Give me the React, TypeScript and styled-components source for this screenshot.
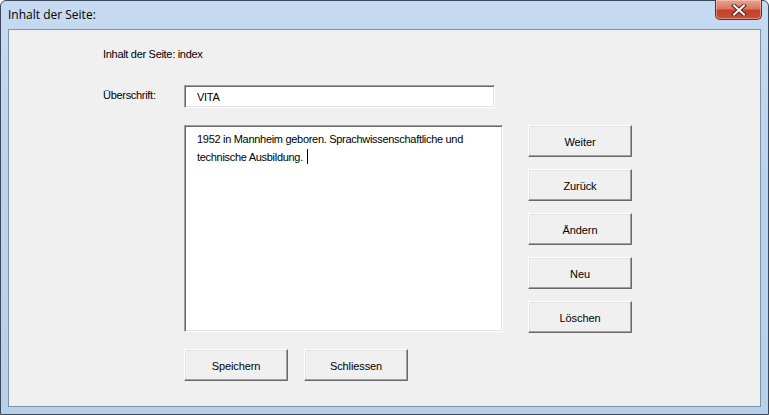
import React from "react";
import styled, { createGlobalStyle } from "styled-components";

const GlobalStyle = createGlobalStyle`
  html, body {
    margin: 0;
    padding: 0;
    width: 769px;
    height: 415px;
    overflow: hidden;
    background: #ffffff;
  }
  * {
    box-sizing: border-box;
  }
`;

const Window = styled.div`
  width: 769px;
  height: 415px;
  display: flex;
  flex-direction: column;
  padding: 0 7px 7px 7px;
  border: 1px solid #3a4a5c;
  border-radius: 6px 6px 0 0;
  background: linear-gradient(180deg, #c6dbf1 0%, #bcd3ec 40%, #b8d0ea 100%);
  font-family: "Liberation Sans", Arial, sans-serif;
`;

const TitleBar = styled.div`
  height: 28px;
  display: flex;
  align-items: flex-start;
  justify-content: space-between;
`;

const Title = styled.span`
  font-family: "Open Sans", "Liberation Sans", sans-serif;
  font-size: 12px;
  color: #000;
  padding: 5px 0 0 0;
`;

const CloseButton = styled.div`
  width: 47px;
  height: 20px;
  margin-top: -1px;
  margin-right: -1px;
  display: flex;
  align-items: center;
  justify-content: center;
  border: 1px solid #6b2b22;
  border-top: none;
  border-radius: 0 0 5px 5px;
  background: linear-gradient(180deg, #e8a496 0%, #d9785f 45%, #c2412a 55%, #c65035 100%);
  box-shadow: inset 0 0 0 1px rgba(255, 220, 210, 0.45);
`;

const Client = styled.div`
  flex: 1;
  background: #f0f0f0;
  border: 1px solid #7f91a6;
  padding: 17px 0 0 94px;
  font-size: 11px;
  letter-spacing: -0.3px;
  color: #000;
`;

const Caption = styled.div`
  height: 14px;
  line-height: 14px;
`;

const FieldRow = styled.div`
  margin-top: 24px;
  display: flex;
  align-items: flex-start;
`;

const Label = styled.div`
  width: 81px;
  padding-top: 4px;
`;

const sunken = `
  background: #ffffff;
  border: 1px solid;
  border-color: #a0a0a0 #ffffff #ffffff #a0a0a0;
  box-shadow: inset 1px 1px 0 #696969, inset -1px -1px 0 #e3e3e3;
`;

const TextInput = styled.div`
  ${sunken}
  width: 311px;
  height: 23px;
  padding: 5px 0 0 12px;
  line-height: 13px;
`;

const EditorRow = styled.div`
  margin-top: 17px;
  margin-left: 81px;
  display: flex;
  align-items: flex-start;
  gap: 25px;
`;

const TextArea = styled.div`
  ${sunken}
  width: 319px;
  height: 207px;
  padding: 4px 8px 0 12px;
  line-height: 18px;
`;

const Caret = styled.span`
  display: inline-block;
  width: 1px;
  height: 15px;
  margin-left: 4px;
  background: #000;
  vertical-align: -3px;
`;

const ButtonColumn = styled.div`
  display: flex;
  flex-direction: column;
  gap: 12px;
`;

const Button = styled.div`
  width: 104px;
  height: 32px;
  display: flex;
  align-items: center;
  justify-content: center;
  background: #f0f0f0;
  border: 1px solid;
  border-color: #ffffff #696969 #696969 #ffffff;
  box-shadow: inset -1px -1px 0 #a0a0a0, inset 1px 1px 0 #e3e3e3;
  font-size: 11px;
  letter-spacing: -0.1px;
  padding-top: 1px;
`;

const FooterRow = styled.div`
  margin-top: 16px;
  margin-left: 81px;
  display: flex;
  gap: 16px;
`;

const CloseIcon = () => (
  <svg width="16" height="12" viewBox="0 0 16 12">
    <path d="M3 1.5 L13 10.5 M13 1.5 L3 10.5" stroke="#5a2018" strokeWidth="4" strokeLinecap="square" />
    <path d="M3 1.5 L13 10.5 M13 1.5 L3 10.5" stroke="#ffffff" strokeWidth="2" strokeLinecap="square" />
  </svg>
);

const sideButtons = ["Weiter", "Zurück", "Ändern", "Neu", "Löschen"];

export default function App() {
  return (
    <>
      <GlobalStyle />
      <Window>
        <TitleBar>
          <Title>Inhalt der Seite:</Title>
          <CloseButton>
            <CloseIcon />
          </CloseButton>
        </TitleBar>
        <Client>
          <Caption>Inhalt der Seite: index</Caption>
          <FieldRow>
            <Label>Überschrift:</Label>
            <TextInput>VITA</TextInput>
          </FieldRow>
          <EditorRow>
            <TextArea>
              1952 in Mannheim geboren. Sprachwissenschaftliche und technische
              Ausbildung.
              <Caret />
            </TextArea>
            <ButtonColumn>
              {sideButtons.map((label) => (
                <Button key={label}>{label}</Button>
              ))}
            </ButtonColumn>
          </EditorRow>
          <FooterRow>
            <Button>Speichern</Button>
            <Button>Schliessen</Button>
          </FooterRow>
        </Client>
      </Window>
    </>
  );
}
